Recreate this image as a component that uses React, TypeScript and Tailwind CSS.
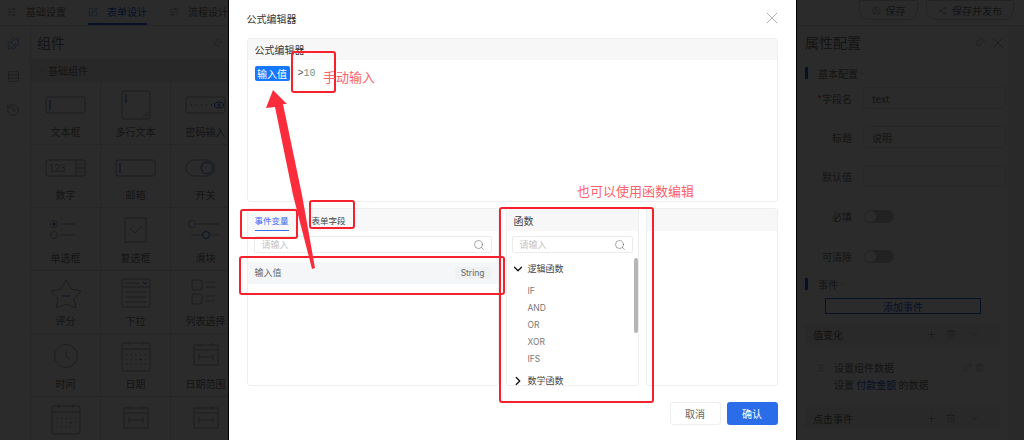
import React from "react";
import { Search, X, ChevronDown, ChevronRight, Pin, Plus, Trash2, Pencil, Save, Share2, History, Puzzle, SquarePen, Route, SlidersHorizontal, GripVertical, Rows3 } from "lucide-react";

const FONT = '"Noto Sans CJK SC", "Noto Sans", sans-serif';
const S = { stroke: "#a6a6a6", fill: "none", strokeWidth: 1 };
const BLUE = "#2563eb";

function Ico({ children }: { children: React.ReactNode }) {
  return <svg width="46" height="34" viewBox="0 0 46 34">{children}</svg>;
}
const Cal = () => (
  <Ico>
    <rect x="9" y="3" width="28" height="28" rx="2" {...S} />
    <path d="M9 9H37M16 1V5M30 1V5" {...S} />
    {[14, 18.5, 23, 27.5, 32].map((x) => [15, 19.5, 24].map((y) => <rect key={x + "-" + y} x={x - 0.7} y={y - 0.7} width="1.5" height="1.5" fill={x === 27.5 && y === 19.5 ? BLUE : "#bbb"} />))}
  </Ico>
);
const Rng = () => (
  <Ico>
    <rect x="11" y="5" width="24" height="20" {...S} />
    <path d="M11 10H35M17 3V7M29 3V7M16 17H30M16 14V20M30 14V20" {...S} />
  </Ico>
);
const icons: Record<string, React.ReactNode> = {
  文本框: <Ico><rect x="3" y="9" width="39" height="16" rx="2" {...S} /><path d="M7 12V22" stroke={BLUE} /></Ico>,
  多行文本: <Ico><rect x="9" y="3" width="28" height="28" rx="2" {...S} /><path d="M13 6V15" stroke={BLUE} /><path d="M30 29L35 24M33 29L36 26" {...S} /></Ico>,
  密码输入: <Ico><rect x="3" y="9" width="39" height="16" rx="2" {...S} /><path d="M8 17H9M13 17H14M18 17H19M23 17H24M28 17H29" stroke="#aaa" strokeWidth="2" /><ellipse cx="36" cy="17" rx="4.5" ry="3" stroke={BLUE} fill="none" /><circle cx="36" cy="17" r="1.2" stroke={BLUE} fill="none" /></Ico>,
  数字: <Ico><rect x="3" y="9" width="39" height="16" rx="2" {...S} /><path d="M33 9V25M33 17H42M35.5 14L37.5 12L39.5 14M35.5 20L37.5 22L39.5 20" {...S} /><text x="6" y="21" fontSize="10" fill="#aaa" fontFamily="Liberation Sans">123</text></Ico>,
  邮箱: <Ico><rect x="3" y="9" width="39" height="16" rx="2" {...S} /><path d="M7 12V22" stroke={BLUE} /></Ico>,
  开关: <Ico><rect x="3" y="9" width="29" height="16" rx="8" {...S} /><circle cx="24" cy="17" r="6" stroke={BLUE} fill="none" /></Ico>,
  单选框: <Ico><circle cx="11" cy="10" r="3.5" {...S} /><circle cx="11" cy="10" r="1.5" fill={BLUE} /><path d="M17 10H32M17 21H32" {...S} /><circle cx="11" cy="21" r="3.5" {...S} /></Ico>,
  复选框: <Ico><rect x="12" y="4" width="21" height="24" {...S} /><path d="M17 14L22 19L29 12" {...S} /></Ico>,
  滑块: <Ico><circle cx="9" cy="10" r="3.5" {...S} /><path d="M13 10H36M8 21H20M28 21H36" {...S} /><circle cx="23" cy="21" r="3.5" stroke={BLUE} fill="none" /></Ico>,
  评分: <Ico><path d="M23 3L28 12L38 14L31 22L33 31L23 27L13 31L15 22L8 14L18 12Z" {...S} /><path d="M19 19H27" stroke={BLUE} /></Ico>,
  下拉: <Ico><rect x="9" y="2" width="28" height="28" rx="2" {...S} /><path d="M9 10H37M13 6H26M13 15H33M13 20H33M13 25H33" {...S} /><path d="M30 5L32 7L34 5" stroke={BLUE} fill="none" /></Ico>,
  列表选择: <Ico><rect x="9" y="3" width="10" height="10" rx="2" {...S} /><rect x="9" y="17" width="10" height="10" rx="2" {...S} /><path d="M23 5H32M23 10H32M23 19H32M23 24H32" {...S} /></Ico>,
  时间: <Ico><circle cx="23" cy="16" r="11.5" {...S} /><path d="M23 10V16L27 19" {...S} /></Ico>,
  日期: <Cal />,
  日期范围: <Rng />,
  范围C: <Cal />,
  范围A: <Rng />,
  范围B: <Rng />,
};

function Cell({ name }: { name: string }) {
  const label = name.startsWith("范围") ? "" : name;
  return (
    <div className="w-[70px] h-[63px] shrink-0 border-r border-b border-[#e2e2e2] flex flex-col items-center pt-[6px]">
      {icons[name]}
      <span className="mt-[4px] text-[10px] leading-[12px] text-[#777] whitespace-nowrap">{label}</span>
    </div>
  );
}

function Tab({ icon, label, active }: { icon: React.ReactNode; label: string; active?: boolean }) {
  return (
    <div className={"h-[25px] flex items-center gap-[9px] border-b-2 " + (active ? "border-[#2563eb] text-[#2563eb]" : "border-transparent text-[#777]")}>
      {icon}
      <span className="text-[10px]">{label}</span>
    </div>
  );
}

function Field({ label, value, req }: { label: string; value?: string; req?: boolean }) {
  return (
    <div className="flex items-center h-[22px] mb-[17px]">
      <span className="w-[47px] ml-[8px] text-right text-[10px] text-[#777] whitespace-nowrap">{req && <span className="text-[#e33]">*</span>}{label}</span>
      <div className="ml-[11px] w-[143px] h-full border border-[#e8e8e8] rounded-[3px] px-[8px] flex items-center text-[10px] text-[#777]">{value}</div>
    </div>
  );
}

function Toggle({ label }: { label: string }) {
  return (
    <div className="flex items-center h-[14px]">
      <span className="w-[47px] ml-[8px] text-right text-[10px] text-[#777]">{label}</span>
      <div className="ml-[12px] w-[30px] h-[13px] rounded-full bg-[#c9c9c9] p-[1px]"><div className="w-[11px] h-[11px] rounded-full bg-white" /></div>
    </div>
  );
}

function Bar({ label }: { label: string }) {
  return (
    <div className="flex items-center h-[14px] text-[10px] text-[#777]">
      <div className="w-[3px] h-[12px] bg-[#2563eb] ml-[8px] mr-[10px]" />
      {label}
      <ChevronDown size={9} strokeWidth={1} />
    </div>
  );
}

function EventRow({ label }: { label: string }) {
  return (
    <div className="mx-[8px] h-[22px] bg-[#f4f4f4] flex items-center px-[8px] text-[10px] text-[#666]">
      <span className="flex-1">{label}</span>
      <Plus size={11} strokeWidth={1} className="mr-[9px]" />
      <Trash2 size={10} strokeWidth={1} className="mr-[12px]" />
      <ChevronDown size={12} strokeWidth={1} className="mr-[12px]" />
    </div>
  );
}

function Page() {
  return (
    <div className="w-[1024px] h-[440px] bg-white flex flex-col overflow-hidden">
      <div className="h-[25px] shrink-0 flex items-start pl-[7px] pr-[10px]">
        <div className="flex gap-[22px]">
          <Tab icon={<SlidersHorizontal size={10} strokeWidth={1.2} />} label="基础设置" />
          <Tab icon={<SquarePen size={10} strokeWidth={1.2} />} label="表单设计" active />
          <Tab icon={<Route size={10} strokeWidth={1.2} />} label="流程设计" />
        </div>
        <div className="ml-auto flex gap-[8px] text-[10px] text-[#777]">
          <div className="w-[59px] h-[20px] border border-[#d4d4d4] rounded-b-[10px] flex items-center justify-center gap-[5px]"><Save size={9} strokeWidth={1.2} />保存</div>
          <div className="w-[88px] h-[20px] border border-[#d4d4d4] rounded-b-[10px] flex items-center justify-center gap-[5px]"><Share2 size={9} strokeWidth={1.2} />保存并发布</div>
        </div>
      </div>
      <div className="flex-1 flex min-h-0 border-t border-[#e2e2e2]">
        <div className="w-[31px] shrink-0 border-r border-[#e2e2e2] flex flex-col items-center gap-[20px] pt-[11px] pr-[4px] text-[#777]">
          <Puzzle size={13} strokeWidth={1.1} className="text-[#2563eb]" />
          <Rows3 size={13} strokeWidth={1.1} />
          <History size={14} strokeWidth={1.1} />
        </div>
        <div className="w-[766px] shrink-0 overflow-hidden">
          <div className="w-[191px] h-[33px] flex items-center justify-between pl-[6px] text-[14px] text-[#777]">
            组件
            <Pin size={10} strokeWidth={1.1} className="rotate-45" />
          </div>
          <div className="h-[23px] bg-[#eeeeee] flex items-center pl-[7px] gap-[1px] text-[10px] text-[#777]"><ChevronDown size={9} strokeWidth={1} />基础组件</div>
          <div className="flex flex-wrap w-[210px]">
            {["文本框", "多行文本", "密码输入", "数字", "邮箱", "开关", "单选框", "复选框", "滑块", "评分", "下拉", "列表选择", "时间", "日期", "日期范围", "范围C", "范围A", "范围B"].map((n) => <Cell key={n} name={n} />)}
          </div>
        </div>
        <div className="flex-1 min-w-0 flex">
          <div className="w-[211px] shrink-0">
            <div className="h-[33px] flex items-center pl-[8px] text-[14px] text-[#777]">
              <span className="flex-1">属性配置</span>
              <Pin size={11} strokeWidth={1.1} className="rotate-45 mr-[4px]" />
              <X size={18} strokeWidth={0.8} className="mr-[1px]" />
            </div>
            <div className="pt-[7px]"><Bar label="基本配置" /></div>
            <div className="pt-[7px]">
              <Field label="字段名" value="text" req />
              <Field label="标题" value="说明" />
              <Field label="默认值" />
            </div>
            <div className="pt-[5px]"><Toggle label="必填" /></div>
            <div className="h-[26px]" />
            <Toggle label="可清除" />
            <div className="pt-[14px]"><Bar label="事件" /></div>
            <div className="mt-[7px] ml-[28px] w-[156px] h-[16px] border border-[#2563eb] flex items-center justify-center text-[10px] text-[#2563eb]">添加事件</div>
            <div className="mt-[9px]"><EventRow label="值变化" /></div>
            <div className="h-[50px] mx-[16px] mt-[0px] pt-[14px] text-[10px] leading-[17px] text-[#777]">
              <div className="flex items-center">
                <GripVertical size={10} strokeWidth={1} className="mr-[8px] ml-[3px]" />
                <span className="flex-1">设置组件数据</span>
                <Pencil size={9} strokeWidth={1} className="mr-[3px]" />
                <Trash2 size={9} strokeWidth={1} className="mr-[8px]" />
              </div>
              <div className="pl-[21px]">设置 <span className="text-[#2563eb]">付款金额</span> 的数据</div>
            </div>
            <div className="mt-[12px]"><EventRow label="点击事件" /></div>
          </div>
          <div className="flex-1 bg-[#f0f0f0]" />
        </div>
      </div>
    </div>
  );
}

function SearchBox({ className }: { className: string }) {
  return (
    <div className={"h-[17px] border border-[#ececec] rounded-[2px] flex items-center pl-[7px] pr-[6px] text-[9px] text-[#c4c4c4] " + className}>
      <span className="flex-1">请输入</span>
      <Search size={12} strokeWidth={1} className="text-[#555]" />
    </div>
  );
}

function Panel({ children, className }: { children: React.ReactNode; className: string }) {
  return <div className={"border border-[#eeeeee] rounded-[3px] overflow-hidden " + className}>{children}</div>;
}

function Modal() {
  return (
    <div className="w-[567px] h-full bg-white flex flex-col px-[18px] shadow-[0_0_0_1px_#000]">
      <div className="h-[38px] shrink-0 flex items-center justify-between pb-[2px]">
        <span className="text-[10px] text-[#333]">公式编辑器</span>
        <X size={20} strokeWidth={0.8} className="text-[#888] mr-[-4px]" />
      </div>
      <Panel className="h-[164px] shrink-0">
        <div className="h-[21px] bg-[#f7f7f7] flex items-center px-[7px] pb-[1px] text-[10px] text-[#333]">公式编辑器</div>
        <div className="flex items-center pl-[7px] pt-[6px]">
          <span className="w-[35px] h-[15px] rounded-[2px] bg-[#1677ff] text-white text-[10px] flex items-center justify-center">输入值</span>
          <span className="ml-[8px] text-[10px] font-['Liberation_Mono'] text-[#555]">&gt;<span className="text-[#6f9488]">10</span></span>
        </div>
      </Panel>
      <div className="h-[178px] mt-[6px] shrink-0 flex gap-[7px]">
        <Panel className="w-[252px] shrink-0 flex flex-col">
          <div className="h-[22px] bg-[#f8f8f8] flex items-start pl-[7px] gap-[23px] text-[8.5px]">
            <span className="h-[22px] pt-[5px] leading-[12px] border-b border-[#3b6ff0] text-[#3b6ff0]">事件变量</span>
            <span className="pt-[5px] leading-[12px] text-[#444]">表单字段</span>
          </div>
          <SearchBox className="mt-[5px] ml-[6px] mr-[6px]" />
          <div className="mt-[9px] h-[22px] bg-[#f5f6f7] flex items-center pl-[7px] pr-[7px] text-[9px] text-[#666]">
            <span className="flex-1">输入值</span>
            <span className="font-['Inter'] text-[8.5px] bg-[#f0f1f2] rounded-[2px] px-[6px] h-[12px] leading-[12px]">String</span>
          </div>
        </Panel>
        <Panel className="w-[133px] shrink-0 flex flex-col">
          <div className="h-[22px] bg-[#f7f7f7] flex items-center pl-[7px] text-[10px] text-[#444]">函数</div>
          <SearchBox className="mt-[5px] mx-[5px]" />
          <div className="relative flex-1 min-h-0 overflow-hidden pl-[7px]">
            <div className="mt-[8px] h-[16px] flex items-center gap-[3px] text-[9px] leading-[10px] text-[#444]"><ChevronDown size={14} strokeWidth={2.2} className="text-[#111] ml-[-3px]" />逻辑函数</div>
            <div className="mt-[6px] pl-[14px] text-[8.5px] leading-[17px] text-[#777] font-['Inter']">
              <div>IF</div><div>AND</div><div>OR</div><div>XOR</div><div>IFS</div>
            </div>
            <div className="mt-[5px] h-[16px] flex items-center gap-[3px] text-[9px] leading-[10px] text-[#444]"><ChevronRight size={14} strokeWidth={2.2} className="text-[#111] ml-[-3px]" />数学函数</div>
            <div className="absolute right-[0px] top-[5px] w-[4px] h-[75px] rounded-full bg-[#b5b5b5]" />
          </div>
        </Panel>
        <Panel className="flex-1"><div className="h-[22px] bg-[#f7f7f7]" /></Panel>
      </div>
      <div className="mt-[16px] flex justify-end gap-[6px] text-[10px]">
        <div className="w-[51px] h-[23px] border border-[#eeeeee] rounded-[3px] flex items-center justify-center text-[#666]">取消</div>
        <div className="w-[51px] h-[23px] bg-[#2b6de8] rounded-[3px] flex items-center justify-center text-white">确认</div>
      </div>
    </div>
  );
}

const boxes = [
  "left-[291px] top-[51px] w-[45px] h-[42px]",
  "left-[240px] top-[209px] w-[58px] h-[30px]",
  "left-[309px] top-[200px] w-[46px] h-[29px]",
  "left-[239px] top-[256px] w-[266px] h-[39px]",
  "left-[499px] top-[207px] w-[155px] h-[196px]",
];

export default function App() {
  return (
    <div className="relative w-[1024px] h-[440px] overflow-hidden" style={{ fontFamily: FONT }}>
      <Page />
      <div className="absolute inset-0 bg-black/[.83] flex justify-center">
        <Modal />
      </div>
      {boxes.map((b) => <div key={b} className={"absolute border-2 border-[#f5222d] rounded-[3px] " + b} />)}
      <svg className="absolute inset-0" width="1024" height="440">
        <polygon points="273,90 287,104 283,104 302,195 315,268 312,269 293,195 275,107 266,108" fill="#fb2c3c" />
      </svg>
      <span className="absolute left-[323px] top-[68px] text-[13px] leading-[18px] text-[#f9616b]">手动输入</span>
      <span className="absolute left-[577px] top-[182px] text-[13px] leading-[18px] text-[#f9616b]">也可以使用函数编辑</span>
    </div>
  );
}
